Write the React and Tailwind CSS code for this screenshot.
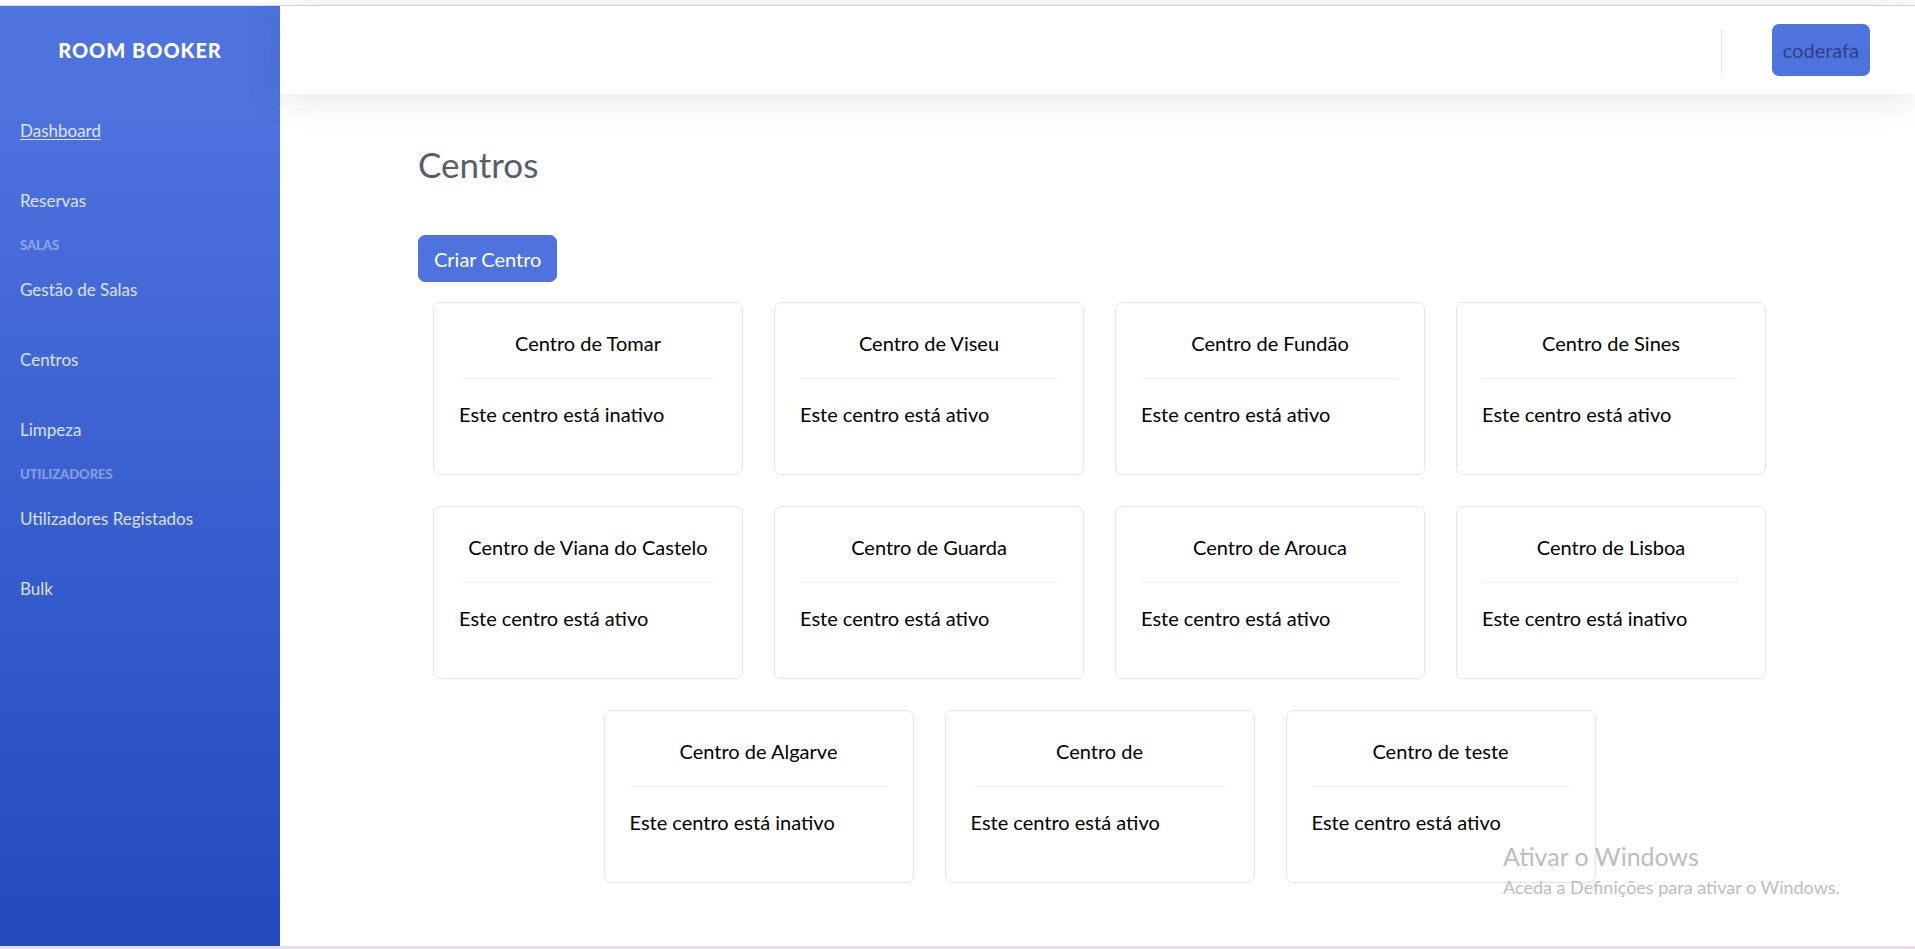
import React from 'react';

const centros = [
  { nome: 'Centro de Tomar', ativo: false },
  { nome: 'Centro de Viseu', ativo: true },
  { nome: 'Centro de Fundão', ativo: true },
  { nome: 'Centro de Sines', ativo: true },
  { nome: 'Centro de Viana do Castelo', ativo: true },
  { nome: 'Centro de Guarda', ativo: true },
  { nome: 'Centro de Arouca', ativo: true },
  { nome: 'Centro de Lisboa', ativo: false },
  { nome: 'Centro de Algarve', ativo: false },
  { nome: 'Centro de', ativo: true },
  { nome: 'Centro de teste', ativo: true },
];

function NavItem({ label, active }) {
  return (
    <div className="h-[70px] flex items-center px-[20px]">
      <a className={`text-[17px] text-white/80 ${active ? 'underline underline-offset-2' : ''}`}>{label}</a>
    </div>
  );
}

function NavHeading({ label }) {
  return (
    <div className="h-[19px] flex items-center px-[20px] text-[13px] font-black uppercase text-white/40">
      {label}
    </div>
  );
}

function Sidebar() {
  return (
    <aside className="w-[280px] shrink-0 bg-[linear-gradient(180deg,#4e73df_10%,#224abe_100%)]">
      <div className="h-[88px] flex items-center justify-center">
        <span className="text-white text-[20px] font-black uppercase tracking-[0.06rem]">Room Booker</span>
      </div>
      <div className="h-[2px]" />
      <NavItem label="Dashboard" active />
      <NavItem label="Reservas" />
      <NavHeading label="Salas" />
      <NavItem label="Gestão de Salas" />
      <NavItem label="Centros" />
      <NavItem label="Limpeza" />
      <NavHeading label="Utilizadores" />
      <NavItem label="Utilizadores Registados" />
      <NavItem label="Bulk" />
    </aside>
  );
}

function CentroCard({ nome, ativo }) {
  return (
    <div className="w-[310px] h-[173px] border border-[#e3e6f0] rounded-[7px] bg-white px-[25px] pt-[25px]">
      <div className="h-[30px] leading-[30px] text-center text-[20px] text-black">{nome}</div>
      <div className="mt-[20px] h-px bg-[#f2f2f4]" />
      <div className="mt-[20px] h-[30px] leading-[30px] text-[20px] text-black">
        Este centro está {ativo ? 'ativo' : 'inativo'}
      </div>
    </div>
  );
}

export default function App() {
  return (
    <div className="relative w-full h-[949px] overflow-hidden bg-white font-['Segoe_UI','Lato','Noto_Sans',sans-serif]">
      <div className="h-[6px] border-b border-[#dcdcdc]" />
      <div className="flex h-[940px]">
        <Sidebar />
        <main className="flex-1 flex flex-col">
          <header className="relative z-10 h-[88px] bg-white shadow-[0_3px_35px_0_rgba(58,59,69,0.15)] flex items-center justify-end pr-[45px]">
            <div className="w-px h-[47px] bg-[#e3e6f0] mr-[50px]" />
            <button className="h-[52px] px-[11px] rounded-[7px] bg-[#4e73df] text-[20px] text-[#2f3f86]">
              coderafa
            </button>
          </header>
          <section className="flex-1 pt-[49px]">
            <h1 className="ml-[138px] text-[35px] leading-[42px] text-[#5a5c69]">Centros</h1>
            <button className="ml-[138px] mt-[50px] h-[47px] px-[15px] rounded-[7px] bg-[#4e73df] border border-[#4e73df] text-white text-[20px]">
              Criar Centro
            </button>
            <div className="ml-[153px] mt-[20px] w-[1333px] flex flex-wrap justify-center gap-[31px]">
              {centros.map((c) => (
                <CentroCard key={c.nome} nome={c.nome} ativo={c.ativo} />
              ))}
            </div>
          </section>
        </main>
      </div>
      <div className="h-[3px] bg-[#e6dcec]" />
      <div className="absolute left-[1503px] top-[840px] text-[#bdbdbd] pointer-events-none">
        <div className="text-[25px] leading-[32px]">Ativar o Windows</div>
        <div className="mt-[3px] text-[18px] leading-[24px]">Aceda a Definições para ativar o Windows.</div>
      </div>
    </div>
  );
}
